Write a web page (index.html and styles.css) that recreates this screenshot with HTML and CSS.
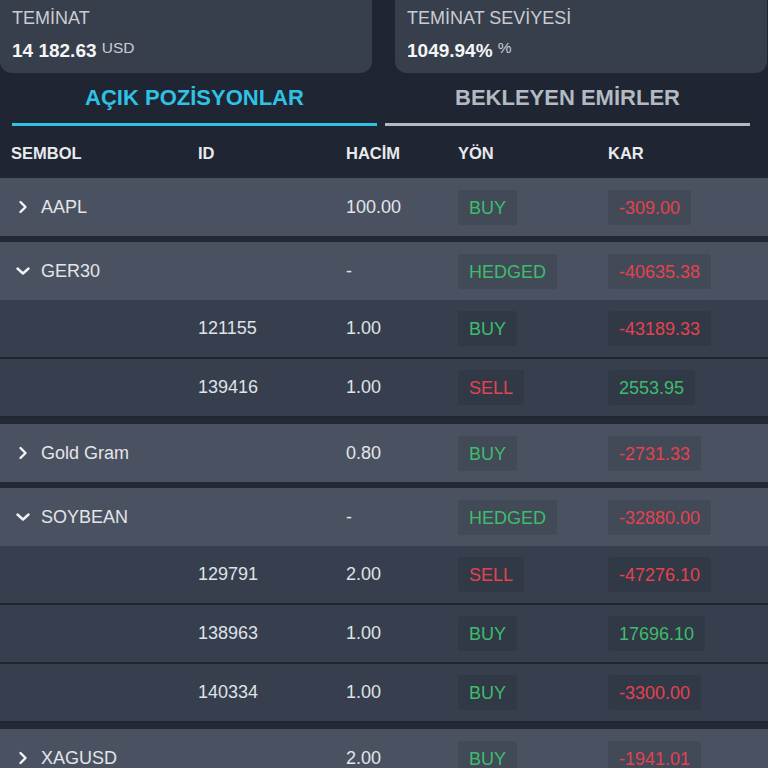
FILE: index.html
```html
<!DOCTYPE html>
<html lang="tr">
<head>
<meta charset="utf-8">
<title>Pozisyonlar</title>
<link rel="stylesheet" href="styles.css">
</head>
<body>
<div class="screen">
  <div class="summary">
    <div class="card">
      <div class="card-label">TEMİNAT</div>
      <div class="card-value">14 182.63 <span class="unit">USD</span></div>
    </div>
    <div class="card">
      <div class="card-label">TEMİNAT SEVİYESİ</div>
      <div class="card-value">1049.94% <span class="unit">%</span></div>
    </div>
  </div>

  <div class="tabs">
    <div class="tab active">AÇIK POZİSYONLAR</div>
    <div class="tab">BEKLEYEN EMİRLER</div>
  </div>

  <div class="row head">
    <div class="c1">SEMBOL</div>
    <div class="c2">ID</div>
    <div class="c3">HACİM</div>
    <div class="c4">YÖN</div>
    <div class="c5">KAR</div>
  </div>

  <div class="list">
    <div class="group">
      <div class="row grow">
        <div class="c1 sym"><span class="chev"><svg width="14" height="14" viewBox="0 0 14 14"><path d="M4.5 2 L9.5 7 L4.5 12" fill="none" stroke="#f2f3f5" stroke-width="2.4" stroke-linecap="round" stroke-linejoin="round"/></svg></span>AAPL</div>
        <div class="c2"></div>
        <div class="c3">100.00</div>
        <div class="c4"><span class="badge green">BUY</span></div>
        <div class="c5"><span class="badge red">-309.00</span></div>
      </div>
    </div>

    <div class="group">
      <div class="row grow">
        <div class="c1 sym"><span class="chev"><svg width="14" height="14" viewBox="0 0 14 14"><path d="M1.5 4.5 L7 9.5 L12.5 4.5" fill="none" stroke="#f2f3f5" stroke-width="2.4" stroke-linecap="round" stroke-linejoin="round"/></svg></span>GER30</div>
        <div class="c2"></div>
        <div class="c3">-</div>
        <div class="c4"><span class="badge green">HEDGED</span></div>
        <div class="c5"><span class="badge red">-40635.38</span></div>
      </div>
      <div class="children">
        <div class="row crow">
          <div class="c1"></div>
          <div class="c2">121155</div>
          <div class="c3">1.00</div>
          <div class="c4"><span class="badge green">BUY</span></div>
          <div class="c5"><span class="badge red">-43189.33</span></div>
        </div>
        <div class="row crow">
          <div class="c1"></div>
          <div class="c2">139416</div>
          <div class="c3">1.00</div>
          <div class="c4"><span class="badge red">SELL</span></div>
          <div class="c5"><span class="badge green">2553.95</span></div>
        </div>
      </div>
    </div>

    <div class="group">
      <div class="row grow">
        <div class="c1 sym"><span class="chev"><svg width="14" height="14" viewBox="0 0 14 14"><path d="M4.5 2 L9.5 7 L4.5 12" fill="none" stroke="#f2f3f5" stroke-width="2.4" stroke-linecap="round" stroke-linejoin="round"/></svg></span>Gold Gram</div>
        <div class="c2"></div>
        <div class="c3">0.80</div>
        <div class="c4"><span class="badge green">BUY</span></div>
        <div class="c5"><span class="badge red">-2731.33</span></div>
      </div>
    </div>

    <div class="group">
      <div class="row grow">
        <div class="c1 sym"><span class="chev"><svg width="14" height="14" viewBox="0 0 14 14"><path d="M1.5 4.5 L7 9.5 L12.5 4.5" fill="none" stroke="#f2f3f5" stroke-width="2.4" stroke-linecap="round" stroke-linejoin="round"/></svg></span>SOYBEAN</div>
        <div class="c2"></div>
        <div class="c3">-</div>
        <div class="c4"><span class="badge green">HEDGED</span></div>
        <div class="c5"><span class="badge red">-32880.00</span></div>
      </div>
      <div class="children">
        <div class="row crow">
          <div class="c1"></div>
          <div class="c2">129791</div>
          <div class="c3">2.00</div>
          <div class="c4"><span class="badge red">SELL</span></div>
          <div class="c5"><span class="badge red">-47276.10</span></div>
        </div>
        <div class="row crow">
          <div class="c1"></div>
          <div class="c2">138963</div>
          <div class="c3">1.00</div>
          <div class="c4"><span class="badge green">BUY</span></div>
          <div class="c5"><span class="badge green">17696.10</span></div>
        </div>
        <div class="row crow">
          <div class="c1"></div>
          <div class="c2">140334</div>
          <div class="c3">1.00</div>
          <div class="c4"><span class="badge green">BUY</span></div>
          <div class="c5"><span class="badge red">-3300.00</span></div>
        </div>
      </div>
    </div>

    <div class="group">
      <div class="row grow">
        <div class="c1 sym"><span class="chev"><svg width="14" height="14" viewBox="0 0 14 14"><path d="M4.5 2 L9.5 7 L4.5 12" fill="none" stroke="#f2f3f5" stroke-width="2.4" stroke-linecap="round" stroke-linejoin="round"/></svg></span>XAGUSD</div>
        <div class="c2"></div>
        <div class="c3">2.00</div>
        <div class="c4"><span class="badge green">BUY</span></div>
        <div class="c5"><span class="badge red">-1941.01</span></div>
      </div>
    </div>
  </div>
</div>
</body>
</html>
```

FILE: styles.css
```css
html, body {
  margin: 0;
  padding: 0;
  background: #1f2532;
}
body {
  font-family: "Liberation Sans", Arial, sans-serif;
  color: #e3e5e9;
}
.screen {
  width: 768px;
  height: 768px;
  overflow: hidden;
  background: #1f2532;
}
.summary {
  display: grid;
  grid-template-columns: 372px 372px;
  column-gap: 23px;
}
.card {
  height: 73px;
  box-sizing: border-box;
  background: #383f4c;
  border-radius: 0 0 12px 12px;
  padding: 8px 12px 0 12px;
}
.card-label {
  font-size: 18px;
  line-height: 20px;
  color: #c9cdd3;
}
.card-value {
  margin-top: 9px;
  font-size: 19px;
  line-height: 22px;
  font-weight: bold;
  color: #f4f5f7;
}
.unit {
  font-weight: normal;
  font-size: 15.5px;
  color: #c9cdd3;
  vertical-align: 4px;
}
.tabs {
  display: flex;
  gap: 8px;
  padding: 0 18px 0 12px;
}
.tab {
  flex: 1;
  text-align: center;
  font-size: 22px;
  font-weight: bold;
  line-height: 24px;
  padding: 13px 0 13px;
  color: #b4b9c2;
  border-bottom: 3px solid #b4b9c2;
}
.tab.active {
  color: #2ec2e4;
  border-bottom-color: #2ec2e4;
}
.row {
  display: flex;
  align-items: center;
  font-size: 18px;
}
.row > div {
  box-sizing: border-box;
  white-space: nowrap;
}
.c1 { width: 198px; padding-left: 11px; }
.c2 { width: 148px; }
.c3 { width: 112px; }
.c4 { width: 150px; }
.c5 { flex: 1; }
.head {
  height: 52px;
  padding-top: 2px;
  box-sizing: border-box;
  font-size: 16.5px;
  font-weight: bold;
  color: #e8eaee;
}
.list {
  background: #232a36;
}
.group {
  margin-bottom: 6px;
}
.grow {
  height: 58px;
  background: #4a5261;
  color: #e3e5e9;
}
.children {
  border-bottom: 2px solid #1f2532;
}
.crow {
  height: 57px;
  background: #373f4e;
  color: #dfe2e6;
}
.crow + .crow {
  border-top: 2px solid #1f2532;
}
.sym {
  display: flex;
  align-items: center;
}
.sym.c1 { padding-left: 16px; }
.chev {
  display: inline-flex;
  width: 14px;
  height: 14px;
  margin-right: 11px;
}
.badge {
  display: inline-block;
  height: 35px;
  line-height: 36px;
  padding: 0 11px;
  background: rgba(0, 0, 0, 0.1);
  border-radius: 2px;
}
.green { color: #3dbd6c; }
.red { color: #e3434f; }
```
